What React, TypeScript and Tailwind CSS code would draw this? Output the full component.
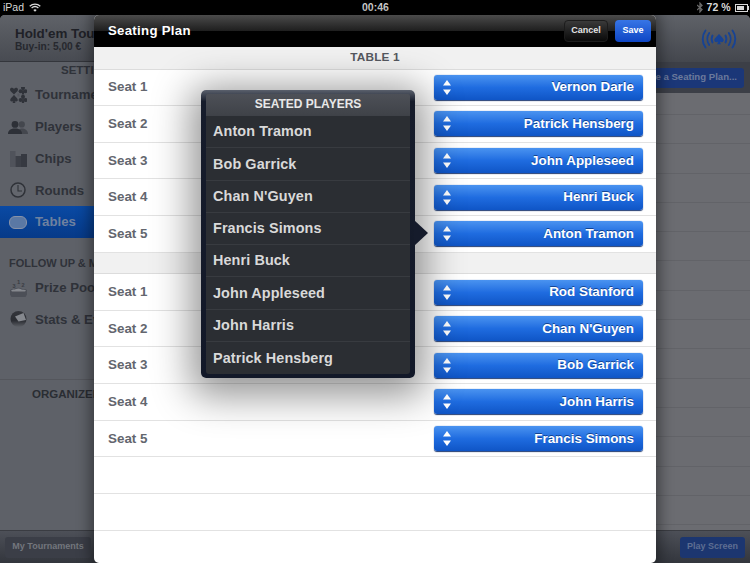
import React from "react";

const Spade = ({ x, y, s = 1 }: { x: number; y: number; s?: number }) => (
  <path transform={`translate(${x} ${y}) scale(${s})`} d="M0-5C1.5-2.5 4.5-1 4.5 1.3 4.5 3 2.4 3.6.8 2.3L1.8 5H-1.8L-.8 2.3C-2.4 3.6-4.5 3-4.5 1.3-4.5-1-1.5-2.5 0-5Z" />
);

const Club = ({ x, y }: { x: number; y: number }) => (
  <g transform={`translate(${x} ${y})`}>
    <circle cx="0" cy="-2.3" r="2" />
    <circle cx="-2.4" cy="1" r="2" />
    <circle cx="2.4" cy="1" r="2" />
    <path d="M-.6-1H.6L1.2 4.4H-1.2Z" />
  </g>
);

const TournamentIcon = () => (
  <svg width="17" height="16" viewBox="0 0 17 16" fill="#2f3239" className="ml-[10px]">
    <path d="M4 7.5C2.6 5.6 0 4.6 0 2.5 0 .4 3 .2 4 1.9 5 .2 8 .4 8 2.5 8 4.6 5.4 5.6 4 7.5Z" />
    <Club x={13} y={3.2} />
    <Spade x={4} y={12} s={0.85} />
    <Club x={13} y={12} />
    <path d="M7.5 6.5H9.5V9.5H7.5Z" fill="#54575e" />
  </svg>
);
const PlayersIcon = () => (
  <svg width="20" height="13" viewBox="0 0 20 13" fill="#2d3037" className="ml-[8px]">
    <circle cx="13.8" cy="3.4" r="3.1" fill="#44474e" />
    <path d="M10 13C10 9 11.5 7.5 14 7.5S20 9 20 13Z" fill="#44474e" />
    <circle cx="7" cy="3.4" r="3.4" />
    <path d="M0 13C0 9 3 7.5 7 7.5S14 9 14 13Z" />
  </svg>
);
const ChipsIcon = () => (
  <svg width="17" height="16" viewBox="0 0 17 16" className="ml-[10px]">
    <rect x="0" y="0" width="5.5" height="16" fill="#50535b" />
    <rect x="5.5" y="5" width="5.5" height="11" fill="#3c3f47" />
    <rect x="11" y="3" width="6" height="13" fill="#363941" />
  </svg>
);
const ClockIcon = () => (
  <svg width="16" height="16" viewBox="0 0 16 16" fill="none" stroke="#2f3238" className="ml-[10px]">
    <circle cx="8" cy="8" r="7" strokeWidth="1.5" fill="#63666d" />
    <path d="M8 3V9H12" strokeWidth="1.1" />
  </svg>
);
const TableIcon = () => (
  <span className="block ml-[9px] w-[18px] h-[13px] rounded-[6px] border-[1.5px] border-[#8792a8] bg-[#5a78a4]" />
);
const PrizeIcon = () => (
  <svg width="17" height="18" viewBox="0 0 17 18" className="ml-[10px]">
    <path d="M0 11C2 9.5 3 10.5 5 9.5 7 8.5 10 8.5 11.5 9.5 13 10.5 15.5 9.5 17 11V15.5L15.5 18H1.5L0 15.5Z" fill="#4c4f57" />
    <path d="M1 11.5C3 10 4 11 6 10 8 9 10 9.5 11.5 10.5 13 11 15 10.5 16 11.5L15 12.5H2Z" fill="#85888e" />
    <text x="7" y="5" fontSize="6" fontWeight="700" fill="#3a3d44">1</text>
    <text x="11.5" y="7.5" fontSize="5.5" fontWeight="700" fill="#3a3d44">2</text>
    <text x="2.5" y="9" fontSize="5.5" fontWeight="700" fill="#3a3d44">3</text>
  </svg>
);
const StatsIcon = () => (
  <svg width="17" height="16" viewBox="0 0 17 16" className="ml-[10px]">
    <defs>
      <linearGradient id="globe" x1="0" y1="0" x2="0" y2="1">
        <stop offset="0" stopColor="#33353b" />
        <stop offset="0.6" stopColor="#2b2d33" />
        <stop offset="1" stopColor="#5d6066" />
      </linearGradient>
    </defs>
    <circle cx="8.5" cy="8" r="8" fill="url(#globe)" />
    <path d="M5 5.5 13.5 2 16 9 8.5 10.5Z" fill="#85888e" />
  </svg>
);

const SideItem = ({
  icon,
  label,
  active,
}: {
  icon: React.ReactNode;
  label: string;
  active?: boolean;
}) => (
  <div
    className={`h-[31.7px] flex items-center text-[13.2px] font-bold whitespace-nowrap ${
      active
        ? "bg-gradient-to-b from-[#0a4aa4] to-[#063a88] text-[#6f819f]"
        : "text-[#2f3239]"
    }`}
  >
    <span className="w-[35px] flex justify-start shrink-0">{icon}</span>
    {label}
  </div>
);

const UpDown = () => (
  <svg width="8" height="15" viewBox="0 0 8 15" fill="white" className="shrink-0">
    <path d="M4 0 8 5.5H0Z" />
    <path d="M4 15 8 9.5H0Z" />
  </svg>
);

const SeatRow = ({ seat, name }: { seat: number; name: string }) => (
  <div className="h-[36.65px] flex items-center pl-[14px] pr-[13px] border-b border-[#e2e2e2]">
    <span className="text-[13.4px] font-bold text-[#63666e] flex-1">Seat {seat}</span>
    <div className="w-[209px] h-[25px] rounded-[3px] flex items-center pl-[9px] pr-[9px] bg-gradient-to-b from-[#4a93f0] via-[#1f6ce0] to-[#0f55c6] shadow-[0_1px_1px_rgba(10,40,100,0.9),0_-1px_0_rgba(220,230,245,0.6)]">
      <UpDown />
      <span className="flex-1 text-right text-[13.4px] font-bold text-white [text-shadow:0_-1px_0_rgba(0,30,90,0.6)]">
        {name}
      </span>
    </div>
  </div>
);

const EmptyRow = () => <div className="h-[36.65px] border-b border-[#e2e2e2]" />;

const GroupHeader = ({ h, label }: { h: string; label?: string }) => (
  <div
    className={`${h} flex items-center justify-center bg-[#f1f1f1] border-b border-[#dcdcdc] text-[11.8px] font-bold text-[#55585f] tracking-[0.2px]`}
  >
    {label}
  </div>
);

const table1 = ["Vernon Darle", "Patrick Hensberg", "John Appleseed", "Henri Buck", "Anton Tramon"];
const table2 = ["Rod Stanford", "Chan N'Guyen", "Bob Garrick", "John Harris", "Francis Simons"];
const seated = [
  "Anton Tramon",
  "Bob Garrick",
  "Chan N'Guyen",
  "Francis Simons",
  "Henri Buck",
  "John Appleseed",
  "John Harris",
  "Patrick Hensberg",
];

export default function App() {
  return (
    <div className="relative w-[750px] h-[563px] overflow-hidden bg-black flex flex-col [font-family:'Liberation_Sans',Arial,sans-serif]">
      {/* status bar */}
      <div className="h-[15px] shrink-0 relative flex items-center justify-between pl-[3px] pr-[1px] text-[10.5px] text-[#d8d8d8]">
        <div className="flex items-center gap-[5px]">
          <span>iPad</span>
          <svg width="12" height="9" viewBox="0 0 12 9" fill="none" stroke="#d8d8d8" strokeWidth="1.3">
            <path d="M.7 3.2C3.8.3 8.2.3 11.3 3.2" />
            <path d="M2.6 5C4.6 3.2 7.4 3.2 9.4 5" />
            <path d="M6 8.8 4.3 6.9C5.3 6 6.7 6 7.7 6.9Z" fill="#d8d8d8" stroke="none" />
          </svg>
        </div>
        <span className="absolute left-[362px] font-bold text-[#dcdcdc]">00:46</span>
        <div className="flex items-center gap-[4px]">
          <svg width="6" height="11" viewBox="0 0 6 11" fill="none" stroke="#6a6a6a" strokeWidth="1.3">
            <path d="M0 3 5 7.5 3 9.8V1.2L5 3.5 0 8" />
          </svg>
          <span className="font-bold">72 %</span>
          <div className="flex items-center">
            <div className="w-[13px] h-[8px] border border-[#d8d8d8] p-[1px]">
              <div className="w-[7px] h-full bg-[#d8d8d8]" />
            </div>
            <div className="w-[1.5px] h-[4px] bg-[#d8d8d8]" />
          </div>
        </div>
      </div>

      {/* underlying app */}
      <div className="flex-1 flex rounded-t-[5px] overflow-hidden bg-[#6b6c71]">
        <div className="w-[250px] shrink-0 flex flex-col bg-[#5e6168] border-r border-[#3a3c42]">
          <div className="h-[47px] shrink-0 pl-[15px] pt-[11px] bg-gradient-to-b from-[#5f6268] to-[#484b52] border-b border-[#34363c]">
            <div className="text-[13.4px] leading-[15px] font-bold text-[#1f2127] whitespace-nowrap">Hold'em Tournament</div>
            <div className="text-[10.2px] leading-[12px] font-bold text-[#26282e]">Buy-in: 5,00 €</div>
          </div>
          <div className="h-[17.5px] pl-[61px] flex items-center text-[11.5px] font-bold text-[#2f3239]">SETTINGS</div>
          <SideItem icon={<TournamentIcon />} label="Tournament" />
          <SideItem icon={<PlayersIcon />} label="Players" />
          <SideItem icon={<ChipsIcon />} label="Chips" />
          <SideItem icon={<ClockIcon />} label="Rounds" />
          <SideItem icon={<TableIcon />} label="Tables" active />
          <div className="h-[34px] pl-[9px] pt-[18px] leading-[14px] text-[11px] font-bold text-[#2f3239] whitespace-nowrap">FOLLOW UP &amp; MONITORING</div>
          <SideItem icon={<PrizeIcon />} label="Prize Pool" />
          <SideItem icon={<StatsIcon />} label="Stats & Evolution" />
          <div className="h-[45px] border-b border-[#54565c]" />
          <div className="flex-1 pl-[32px] pt-[7px] text-[11.5px] leading-[14px] font-bold text-[#2a2d33]">ORGANIZER</div>
          <div className="h-[33px] shrink-0 flex items-center pl-[5px] bg-gradient-to-b from-[#4d5058] to-[#33363d] border-t border-[#3a3c42]">
            <div className="w-[86px] h-[21px] rounded-[3px] bg-[#3b3e47] flex items-center justify-center text-[9px] font-bold text-[#73767d]">My Tournaments</div>
          </div>
        </div>

        <div className="flex-1 flex flex-col min-w-0">
          <div className="h-[47px] shrink-0 flex items-center justify-end pr-[13px] bg-gradient-to-b from-[#5f6268] to-[#44474e]">
            <svg width="36" height="20" viewBox="0 0 36 20" fill="none" stroke="#174394" strokeWidth="1.9" strokeLinecap="round">
              <path d="M4.5 1.5C.8 6.5.8 13.5 4.5 18.5" />
              <path d="M8.2 4C5.8 7.5 5.8 12.5 8.2 16" />
              <path d="M11.5 6.5C10.3 8.8 10.3 11.2 11.5 13.5" />
              <path d="M31.5 1.5C35.2 6.5 35.2 13.5 31.5 18.5" />
              <path d="M27.8 4C30.2 7.5 30.2 12.5 27.8 16" />
              <path d="M24.5 6.5C25.7 8.8 25.7 11.2 24.5 13.5" />
              <g fill="#174394" stroke="none">
                <Spade x={18} y={10} s={1.05} />
              </g>
            </svg>
          </div>
          <div className="h-[31px] shrink-0 flex items-center justify-end pr-[6px] bg-[#3c3f47]">
            <div className="w-[120px] h-[20px] pr-[7px] rounded-[3px] bg-[#1b3778] flex items-center justify-end text-[9.6px] font-bold text-[#6b7a9c] whitespace-nowrap">Create a Seating Plan...</div>
          </div>
          <div className="flex-1">
            <div className="h-[22px] border-b border-[#626368]" />
            {[0, 1, 2, 3, 4, 5, 6, 7, 8, 9, 10, 11, 12, 13].map((i) => (
              <div key={i} className="h-[29.3px] border-b border-[#626368]" />
            ))}
          </div>
          <div className="h-[33px] shrink-0 flex items-center justify-end pr-[5px] bg-gradient-to-b from-[#4d5058] to-[#33363d] border-t border-[#3a3c42]">
            <div className="w-[65px] h-[21px] rounded-[3px] bg-[#1c3670] flex items-center justify-center text-[9px] font-bold text-[#5e6e92]">Play Screen</div>
          </div>
        </div>
      </div>

      {/* modal */}
      <div className="absolute left-[94px] top-[15px] w-[562px] h-[548px] rounded-[5px] overflow-hidden flex flex-col bg-white shadow-[0_0_14px_4px_rgba(0,0,0,0.4)]">
        <div className="h-[32px] shrink-0 flex items-center pl-[14px] pr-[5px] bg-[linear-gradient(to_bottom,#4b4b4b_0%,#1f1f1f_49%,#000_50%,#000_100%)]">
          <span className="flex-1 text-[13.2px] font-bold text-white tracking-[0.3px]">Seating Plan</span>
          <div className="w-[44px] h-[22px] mr-[7px] rounded-[4px] bg-gradient-to-b from-[#3a3a3a] to-[#0a0a0a] border border-[#1c1c1c] flex items-center justify-center text-[9px] font-bold text-[#e4e4e4]">Cancel</div>
          <div className="w-[36px] h-[22px] rounded-[4px] bg-gradient-to-b from-[#3775e6] to-[#0e45c4] flex items-center justify-center text-[9px] font-bold text-white">Save</div>
        </div>
        <GroupHeader h="h-[22.5px]" label="TABLE 1" />
        {table1.map((n, i) => (
          <SeatRow key={n} seat={i + 1} name={n} />
        ))}
        <GroupHeader h="h-[21.5px]" />
        {table2.map((n, i) => (
          <SeatRow key={n} seat={i + 1} name={n} />
        ))}
        <EmptyRow />
        <EmptyRow />
      </div>

      {/* popover */}
      <div className="absolute left-[201px] top-[90px] w-[214px] h-[288px] rounded-[5px] bg-[linear-gradient(to_bottom,#5a606c_0%,#161c2b_4%,#121828_100%)] pt-[4px] px-[5px] pb-[4px] shadow-[0_8px_38px_10px_rgba(0,0,0,0.42)]">
        <div className="h-[22px] pb-[2px] rounded-t-[2px] flex items-center justify-center bg-gradient-to-b from-[#4d5057] to-[#3f4248] text-[12px] font-bold text-[#e8e8e8]">
          SEATED PLAYERS
        </div>
        <div className="rounded-b-[3px] bg-[#2b2e33]">
          {seated.map((n, i) => (
            <div
              key={n}
              className={`h-[32.25px] flex items-center pl-[7px] pt-[1px] text-[14.4px] font-bold text-[#d9d9d9] tracking-[0.1px] ${
                i < 7 ? "border-b border-[#383b40]" : ""
              }`}
            >
              {n}
            </div>
          ))}
        </div>
        <svg width="14" height="26" viewBox="0 0 14 26" className="absolute left-[213px] top-[130px]" fill="#151b2b">
          <path d="M0 0 14 13 0 26Z" />
        </svg>
      </div>
    </div>
  );
}
